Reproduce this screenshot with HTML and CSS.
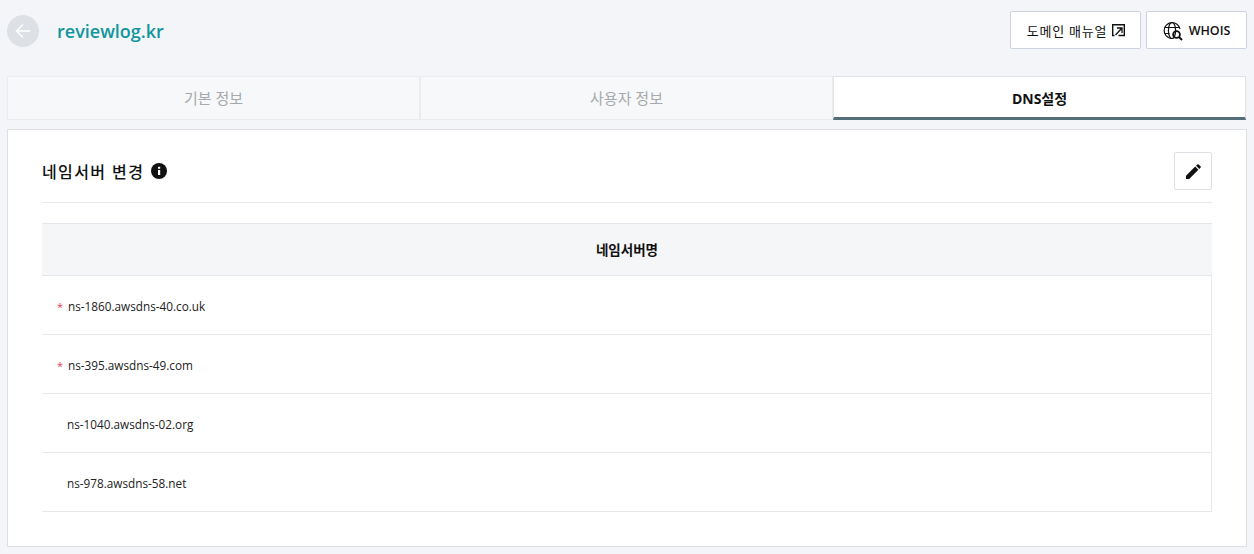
FILE: index.html
```html
<!DOCTYPE html>
<html lang="ko">
<head>
<meta charset="utf-8">
<title>reviewlog.kr</title>
<link rel="stylesheet" href="styles.css">
</head>
<body>
<div class="page">
  <header class="top">
    <div class="title-group">
      <button class="back" aria-label="뒤로">
        <svg width="16" height="16" viewBox="0 0 16 16" fill="none" stroke="#fff" stroke-width="1.4"><path d="M15 8H1.5M8 1.5 1.5 8 8 14.5"/></svg>
      </button>
      <h1 class="domain">reviewlog.kr</h1>
    </div>
    <div class="actions">
      <a class="btn btn-manual">도메인 매뉴얼
        <svg width="13" height="13" viewBox="0 0 13 13" fill="none" stroke="#111"><path d="M2.500 11.500H.7V.7h11.600v10.800H6.500" stroke-width="1.400"/><path d="M3.500 11 9.500 4.500M5 4h5v5" stroke-width="1.300"/></svg>
      </a>
      <a class="btn btn-whois">
        <svg width="20" height="20" viewBox="0 0 20 20" fill="none" stroke="#111" stroke-width="1.2"><path d="M8 17.500a8 8 0 1 1 9-9.500"/><ellipse cx="9" cy="9.500" rx="3.600" ry="8"/><path d="M1.500 6.500h15M1.500 12.500h5"/><circle cx="13.500" cy="13.500" r="3.400" stroke-width="1.800"/><path d="m16 16 3 3" stroke-width="2"/></svg>
        WHOIS
      </a>
    </div>
  </header>
  <nav class="tabs">
    <a class="tab">기본 정보</a>
    <a class="tab">사용자 정보</a>
    <a class="tab active">DNS설정</a>
  </nav>
  <section class="panel">
    <div class="panel-head">
      <h2 class="panel-title">네임서버 변경
        <svg class="info" width="16" height="16" viewBox="0 0 16 16"><circle cx="8" cy="8" r="8" fill="#111"/><rect x="7" y="7" width="2.200" height="5" fill="#fff"/><rect x="7" y="3.800" width="2.200" height="2" fill="#fff"/></svg>
      </h2>
      <button class="edit" aria-label="편집">
        <svg width="15" height="15" viewBox="0 0 15 15"><path d="M0 15v-3.200L9.200 2.600l3.200 3.200L3.200 15zM10.100 1.700 11.300.5a1 1 0 0 1 1.400 0l1.800 1.800a1 1 0 0 1 0 1.400l-1.200 1.200z" fill="#111"/></svg>
      </button>
    </div>
    <div class="table">
      <div class="thead">네임서버명</div>
      <div class="row"><span class="req">*</span>ns-1860.awsdns-40.co.uk</div>
      <div class="row"><span class="req">*</span>ns-395.awsdns-49.com</div>
      <div class="row plain">ns-1040.awsdns-02.org</div>
      <div class="row plain">ns-978.awsdns-58.net</div>
    </div>
  </section>
</div>
</body>
</html>
```
FILE: styles.css
```css
* { box-sizing: border-box; }
html, body { margin: 0; height: 100%; }
body {
  background: #f3f5f9;
  color: #111;
  font-family: "Open Sans", "Noto Sans CJK KR", sans-serif;
  overflow: hidden;
}
.page { padding: 11px 7px 0; }
.top {
  display: flex;
  justify-content: space-between;
  align-items: flex-start;
  height: 65px;
}
.title-group { display: flex; align-items: center; gap: 18px; padding-top: 2px; }
.back {
  width: 32px; height: 32px;
  border: 0; padding: 0;
  border-radius: 50%;
  background: #dde1e5;
  display: flex; align-items: center; justify-content: center;
}
.domain {
  margin: 0;
  font-size: 18px;
  line-height: 36px;
  font-weight: 600;
  color: #10969c;
}
.actions { display: flex; gap: 5px; }
.btn {
  height: 38px;
  display: flex; align-items: center; justify-content: center;
  background: #fff;
  border: 1px solid #cbd3df;
  border-radius: 2px;
  font-size: 13px;
  color: #111;
}
.btn-manual { width: 131px; gap: 5px; letter-spacing: .8px; padding-left: 1px; }
.btn-whois { width: 101px; gap: 6px; font-weight: 600; font-size: 12.500px; padding-top: 1px; }
.tabs { display: flex; height: 44px; width: 1239px; }
.tab {
  flex: 1;
  display: flex; align-items: center; justify-content: center;
  background: #f7f8fa;
  border: 1px solid #eaedf0;
  font-size: 15px;
  color: #a5a8ac;
  padding-bottom: 1px;
}
.tab.active {
  background: #fff;
  border-color: #dfe3e8;
  border-bottom: 3px solid #546e7a;
  color: #111;
  font-weight: 700;
  font-size: 14px;
  padding: 1px 0 0;
}
.panel {
  margin-top: 9px;
  width: 1240px;
  height: 418px;
  background: #fff;
  border: 1px solid #dcdfe4;
  padding: 22px 34px 0;
}
.panel-head {
  height: 51px;
  display: flex; justify-content: space-between; align-items: flex-start;
  border-bottom: 1px solid #e6e8ec;
}
.panel-title {
  margin: 0;
  height: 38px;
  display: flex; align-items: center; gap: 7px;
  font-size: 16px;
  font-weight: 500;
  letter-spacing: 1.400px;
}
.edit {
  width: 38px; height: 38px; padding: 0;
  background: #fff;
  border: 1px solid #dde1e6;
  border-radius: 2px;
  display: flex; align-items: center; justify-content: center;
}
.table {
  margin-top: 20px;
  border-top: 1px solid #e3e6ea;
}
.thead {
  height: 52px;
  display: flex; align-items: center; justify-content: center;
  background: #f5f6f8;
  border-bottom: 1px solid #e3e6ea;
  font-size: 13.500px;
  font-weight: 700;
  padding-bottom: 2px;
}
.row {
  height: 59px;
  display: flex; align-items: center;
  padding: 2px 0 0 15px;
  border-bottom: 1px solid #e6e8ec;
  border-right: 1px solid #e6e8ec;
  font-size: 11.750px;
  color: #222;
}
.row.plain { padding-left: 25px; }
.req { color: #e0405e; width: 11px; font-size: 11px; }
```
